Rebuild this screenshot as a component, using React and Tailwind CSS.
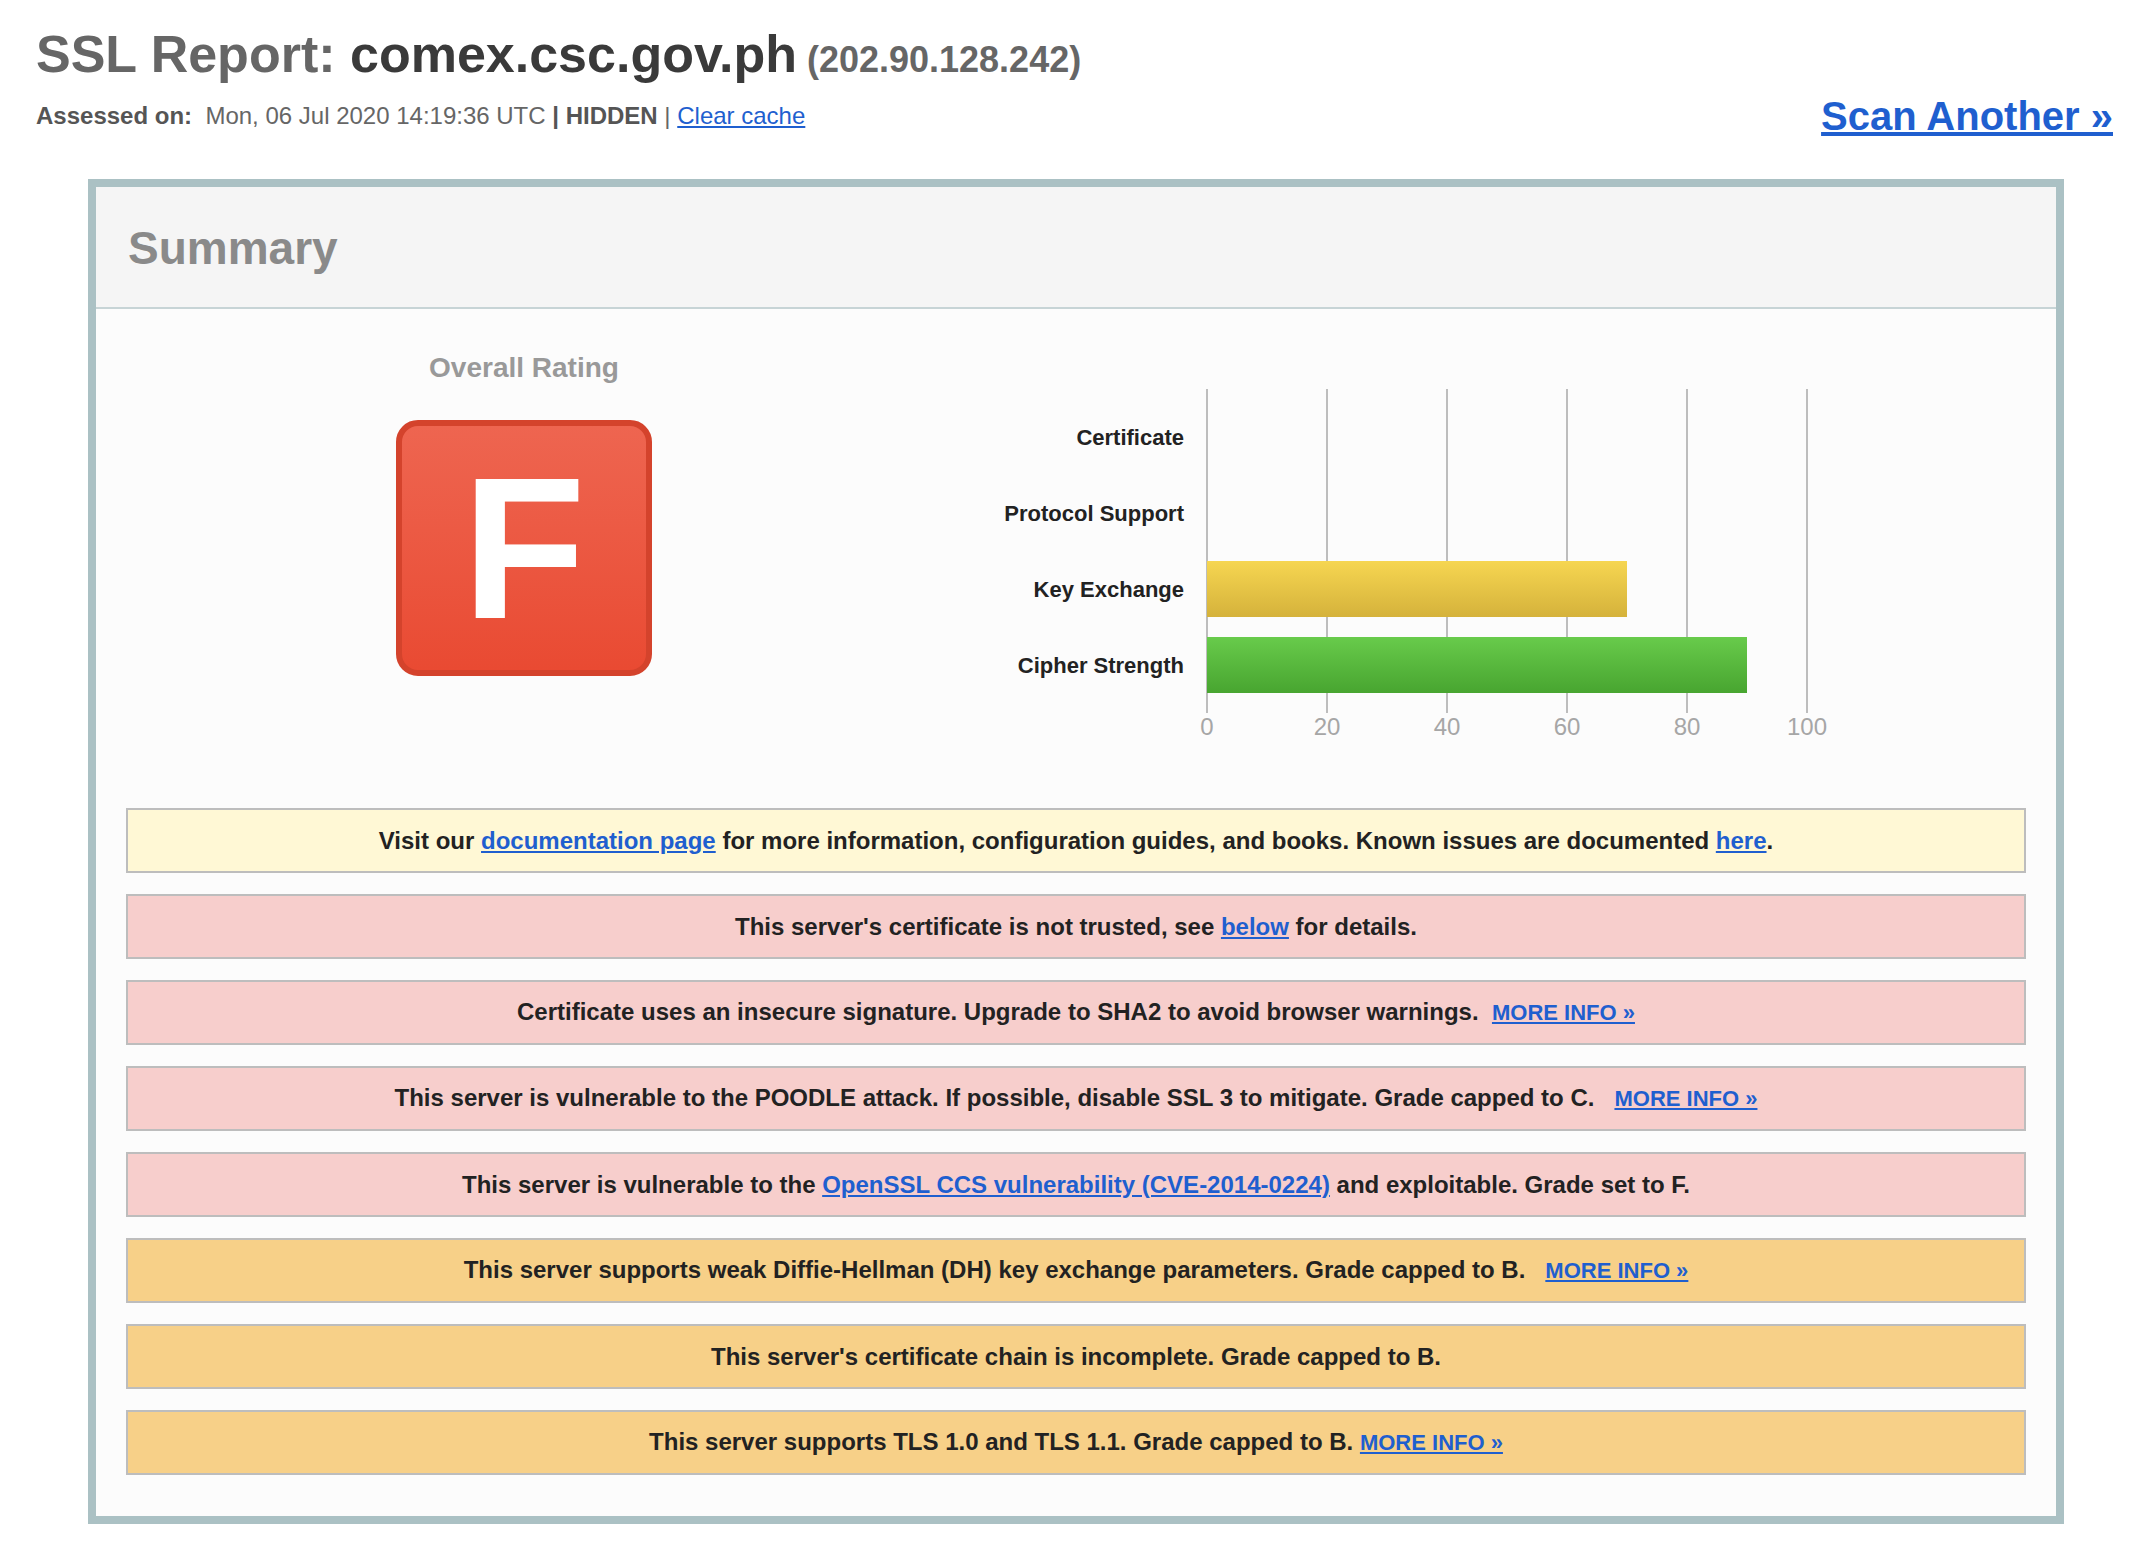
import React from 'react';

const font = { fontFamily: '"Liberation Sans", Arial, sans-serif' };

const rows = [
    { label: 'Certificate', value: 0 },
    { label: 'Protocol Support', value: 0 },
    { label: 'Key Exchange', value: 70, bar: 'bg-gradient-to-b from-[#f6d651] to-[#d5b23b]' },
    { label: 'Cipher Strength', value: 90, bar: 'bg-gradient-to-b from-[#68cb4b] to-[#48a530]' },
];

const ticks = [0, 20, 40, 60, 80, 100];

const Link = ({ children, className = '' }) => (
    <a href="#" className={`text-[#1f5fcf] underline ${className}`}>{children}</a>
);

const MoreInfo = () => <Link className="text-[22px]">MORE INFO »</Link>;

const notices = [
    {
        tone: 'bg-[#fff8d5]',
        body: <>Visit our <Link>documentation page</Link> for more information, configuration guides, and books. Known issues are documented <Link>here</Link>.</>,
    },
    {
        tone: 'bg-[#f7cecc]',
        body: <>This server's certificate is not trusted, see <Link>below</Link> for details.</>,
    },
    {
        tone: 'bg-[#f7cecc]',
        body: <>Certificate uses an insecure signature. Upgrade to SHA2 to avoid browser warnings.&nbsp; <MoreInfo /></>,
    },
    {
        tone: 'bg-[#f7cecc]',
        body: <>This server is vulnerable to the POODLE attack. If possible, disable SSL 3 to mitigate. Grade capped to C.&nbsp;&nbsp; <MoreInfo /></>,
    },
    {
        tone: 'bg-[#f7cecc]',
        body: <>This server is vulnerable to the <Link>OpenSSL CCS vulnerability (CVE-2014-0224)</Link> and exploitable. Grade set to F.</>,
    },
    {
        tone: 'bg-[#f7d088]',
        body: <>This server supports weak Diffie-Hellman (DH) key exchange parameters. Grade capped to B.&nbsp;&nbsp; <MoreInfo /></>,
    },
    {
        tone: 'bg-[#f7d088]',
        body: <>This server's certificate chain is incomplete. Grade capped to B.</>,
    },
    {
        tone: 'bg-[#f7d088]',
        body: <>This server supports TLS 1.0 and TLS 1.1. Grade capped to B. <MoreInfo /></>,
    },
];

const Chart = () => (
    <div className="flex flex-col pt-[80px]">
        <div className="flex">
            <div className="w-[255px] pr-[23px] py-[10px] flex flex-col">
                {rows.map(r => (
                    <div key={r.label} className="h-[76px] flex items-center justify-end text-[22px] font-bold text-[#222]">
                        {r.label}
                    </div>
                ))}
            </div>
            <div className="relative w-[600px] h-[324px] py-[10px]">
                {/* grid lines */}
                {ticks.map((t, i) => (
                    <div
                        key={t}
                        className="absolute top-0 bottom-0 w-[2px] -ml-[1px] bg-[#bdbdbd]"
                        style={{ left: `${i * 120}px` }}
                    />
                ))}
                {rows.map(r => (
                    <div key={r.label} className="relative h-[76px] flex items-center">
                        {r.value > 0 && (
                            <div className={`h-[56px] ${r.bar}`} style={{ width: `${r.value * 6}px` }} />
                        )}
                    </div>
                ))}
            </div>
        </div>
        <div className="flex pl-[255px]">
            <div className="relative w-[600px] h-[28px]">
                {ticks.map((t, i) => (
                    <span
                        key={t}
                        className="absolute top-0 -translate-x-1/2 text-[24px] leading-[28px] text-[#a6a6a6]"
                        style={{ left: `${i * 120}px` }}
                    >
                        {t}
                    </span>
                ))}
            </div>
        </div>
    </div>
);

export default function App() {
    return (
        <div className="bg-white min-h-screen pb-[25px]" style={font}>
            <div className="flex justify-between items-start pl-[36px] pr-[39px]">
                <div className="pt-[24px]">
                    <div className="leading-[60px] font-bold whitespace-nowrap">
                        <span className="text-[52px] text-[#666]">SSL Report: </span>
                        <span className="text-[52px] text-[#3a3a3a]">comex.csc.gov.ph</span>
                        <span className="text-[36px] text-[#666]"> (202.90.128.242)</span>
                    </div>
                    <div className="mt-[4px] text-[24px] leading-[30px] text-[#666]">
                        <span className="font-bold text-[#555]">Assessed on:</span>&nbsp; Mon, 06 Jul 2020 14:19:36 UTC{' '}
                        <span className="font-bold text-[#555]">| HIDDEN</span> | <Link>Clear cache</Link>
                    </div>
                </div>
                <div className="pt-[92px]">
                    <Link className="text-[40px] leading-[48px] font-bold">Scan Another »</Link>
                </div>
            </div>

            <div className="mx-[88px] mt-[39px] border-[8px] border-[#abc1c4] bg-[#fcfcfc]">
                <div className="bg-[#f5f5f5] border-b-2 border-[#c7d4d6] pl-[32px] pt-[34px] pb-[32px]">
                    <h2 className="text-[46px] leading-[54px] font-bold text-[#8a8a8a]">Summary</h2>
                </div>

                <div className="flex">
                    <div className="w-[856px] flex flex-col items-center pt-[43px]">
                        <div className="text-[28px] leading-[32px] font-bold text-[#999]">Overall Rating</div>
                        <div className="mt-[36px] w-[256px] h-[256px] rounded-[22px] border-[6px] border-[#d4432c] bg-gradient-to-b from-[#ee6550] to-[#e94a32] flex items-center justify-center">
                            <span className="text-white font-bold text-[202px] leading-none">F</span>
                        </div>
                    </div>
                    <Chart />
                </div>

                <div className="mt-[67px] px-[30px] pb-[41px] flex flex-col gap-[21px]">
                    {notices.map((n, i) => (
                        <div
                            key={i}
                            className={`h-[65px] border-2 border-[#bdbdbd] ${n.tone} flex items-center justify-center text-center text-[24px] leading-[28px] font-bold text-[#222]`}
                        >
                            <div>{n.body}</div>
                        </div>
                    ))}
                </div>
            </div>
        </div>
    );
}
